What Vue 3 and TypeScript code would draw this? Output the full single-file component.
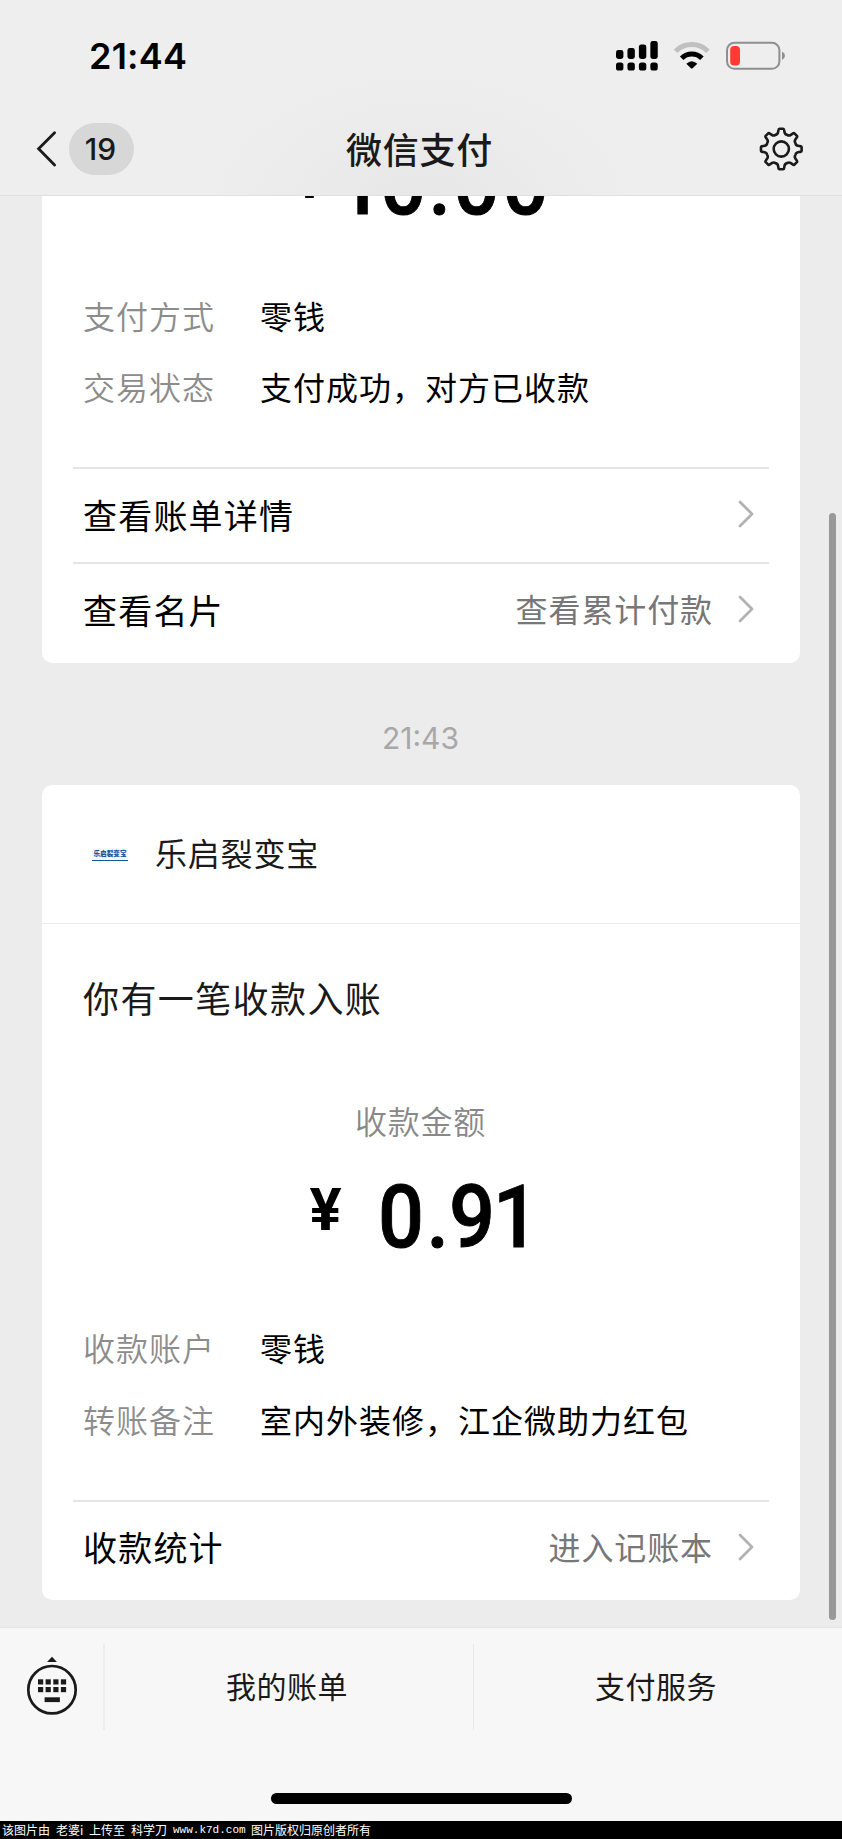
<script setup lang="ts">
interface Field {
  label: string
  value: string
}
interface Action {
  title: string
  hint?: string
}

const firstFields: Field[] = [
  { label: '支付方式', value: '零钱' },
  { label: '交易状态', value: '支付成功，对方已收款' },
]
const firstActions: Action[] = [
  { title: '查看账单详情' },
  { title: '查看名片', hint: '查看累计付款' },
]
const secondFields: Field[] = [
  { label: '收款账户', value: '零钱' },
  { label: '转账备注', value: '室内外装修，江企微助力红包' },
]
const secondActions: Action[] = [{ title: '收款统计', hint: '进入记账本' }]
const menu: string[] = ['我的账单', '支付服务']

// Amount digits are condensed horizontally; positions are given in card space.
const squeeze = 0.93
const spread = (xs: number[]): string => xs.map((x) => (x / squeeze).toFixed(2)).join(' ')
const firstDigits = spread([337, 380.2, 428.5, 453.6, 502.6])
const secondDigits = spread([378, 426.5, 449, 493])

// Eight-tooth gear outline centred on the origin.
function gearPath(): string {
  const at = (r: number, deg: number): string => {
    const a = ((deg - 90) * Math.PI) / 180
    return `${(r * Math.cos(a)).toFixed(2)} ${(r * Math.sin(a)).toFixed(2)}`
  }
  let d = ''
  for (let k = 0; k < 8; k++) {
    const c = k * 45
    d += `${k === 0 ? 'M' : 'L'}${at(19.2, c - 8.5)}`
    d += `Q${at(20.4, c - 7.5)} ${at(20.4, c - 5)}L${at(20.4, c + 5)}`
    d += `Q${at(20.4, c + 7.5)} ${at(19.2, c + 8.5)}`
    d += `L${at(17, c + 11)}Q${at(15, c + 14)} ${at(15.3, c + 22.5)}`
    d += `Q${at(15, c + 31)} ${at(17, c + 34)}`
  }
  return d + 'Z'
}
const gear = gearPath()
const signalTops: number[] = [50, 48, 44.5, 41]
const keyColumns: number[] = [37.7, 45.3, 53, 60.6]
</script>

<template>
  <div class="screen">
    <header class="header">
      <div class="status">
        <span class="clock">21:44</span>
        <svg class="status-icons" width="176" height="40" viewBox="612 36 176 40">
          <g v-for="(top, i) in signalTops" :key="i">
            <rect :x="616 + i * 11.45" :y="top" width="7.4" :height="59 - top" rx="2.4" />
            <rect :x="616 + i * 11.45" y="62.5" width="7.4" height="8" rx="2.6" />
          </g>
          <path d="M675.6 51.2A23 23 0 0 1 707.9 51.2" fill="none" stroke="#c0c0c0" stroke-width="5" />
          <path d="M681.7 58.2A14.4 14.4 0 0 1 701.9 58.2" fill="none" stroke="#000" stroke-width="5" />
          <path d="M686.3 63.7Q691.8 58.6 697.3 63.7L692.6 68.3Q691.8 69 691 68.3Z" />
          <rect x="727" y="42.8" width="52.4" height="26" rx="7.5" fill="none" stroke="#8f8f8f" stroke-width="2" />
          <rect x="730.2" y="46" width="9.8" height="19.6" rx="3.8" fill="#ff3b30" />
          <path d="M782 51.5Q785 53 785 55.8Q785 58.600 782 60Z" fill="#8f8f8f" />
        </svg>
      </div>
      <div class="nav">
        <svg class="back" width="22" height="38" viewBox="36 130 22 38">
          <path d="M54.600 132.700L38.600 148.800L54.600 165" fill="none" stroke="#1a1a1a" stroke-width="2.8" stroke-linecap="round" />
        </svg>
        <span class="badge">19</span>
        <h1 class="title">微信支付</h1>
        <svg class="gear" width="46" height="46" viewBox="-23.300 -23 46 46" fill="none" stroke="#1a1a1a" stroke-width="2.6" stroke-linejoin="round">
          <path :d="gear" />
          <circle r="7.6" />
        </svg>
      </div>
    </header>

    <main class="feed">
      <section class="card first">
        <svg class="amount" width="758" height="80" viewBox="42 1180 758 80">
          <text class="yen" x="293.500" y="1229.500">¥</text>
          <text class="digits" :transform="`scale(${squeeze} 1)`" :x="firstDigits" y="1246">10.00</text>
        </svg>
        <dl class="fields">
          <div v-for="f in firstFields" :key="f.label" class="field">
            <dt>{{ f.label }}</dt>
            <dd>{{ f.value }}</dd>
          </div>
        </dl>
        <div v-for="a in firstActions" :key="a.title" class="action">
          <span class="action-title">{{ a.title }}</span>
          <span class="hint">{{ a.hint }}</span>
          <svg class="chevron" width="18" height="30" viewBox="0 0 18 30">
            <path d="M3 3L15 15L3 27" fill="none" stroke="#b2b2b2" stroke-width="2.8" stroke-linecap="round" stroke-linejoin="round" />
          </svg>
        </div>
      </section>

      <time class="stamp">21:43</time>

      <section class="card second">
        <div class="merchant">
          <span class="logo">乐启裂变宝</span>
          <span class="merchant-name">乐启裂变宝</span>
        </div>
        <h2 class="headline">你有一笔收款入账</h2>
        <p class="caption">收款金额</p>
        <svg class="amount" width="758" height="80" viewBox="42 1180 758 80">
          <text class="yen" x="309.500" y="1229">¥</text>
          <text class="digits" :transform="`scale(${squeeze} 1)`" :x="secondDigits" y="1246">0.91</text>
        </svg>
        <dl class="fields">
          <div v-for="f in secondFields" :key="f.label" class="field">
            <dt>{{ f.label }}</dt>
            <dd>{{ f.value }}</dd>
          </div>
        </dl>
        <div v-for="a in secondActions" :key="a.title" class="action">
          <span class="action-title">{{ a.title }}</span>
          <span class="hint">{{ a.hint }}</span>
          <svg class="chevron" width="18" height="30" viewBox="0 0 18 30">
            <path d="M3 3L15 15L3 27" fill="none" stroke="#b2b2b2" stroke-width="2.8" stroke-linecap="round" stroke-linejoin="round" />
          </svg>
        </div>
      </section>
      <div class="scrollbar"></div>
    </main>

    <footer class="footer">
      <div class="menu">
        <div class="keyboard">
          <svg width="54" height="64" viewBox="24.700 1653 54 64">
            <path d="M46.800 1662L51.700 1656.800L56.600 1662Z" fill="#1a1a1a" />
            <circle cx="51.700" cy="1689.700" r="23.700" fill="none" stroke="#1a1a1a" stroke-width="2.700" />
            <g fill="#1a1a1a">
              <template v-for="x in keyColumns" :key="x">
                <rect :x="x" y="1679.300" width="5.200" height="5.200" />
                <rect :x="x" y="1687" width="5.200" height="5.200" />
              </template>
              <rect x="44.300" y="1697.300" width="15.300" height="4.800" />
            </g>
          </svg>
        </div>
        <div v-for="m in menu" :key="m" class="menu-item">{{ m }}</div>
      </div>
      <div class="home"></div>
    </footer>

    <div class="watermark">
      <span class="w1">该图片由</span><span class="w2">老婆i</span><span class="w3">上传至</span><span class="w4">科学刀</span><span class="w5">www.k7d.com</span><span class="w6">图片版权归原创者所有</span>
    </div>
  </div>
</template>

<style>
body {
  margin: 0;
  background: #ececec;
}
</style>

<style scoped>
.screen {
  width: 842px;
  height: 1839px;
  display: flex;
  flex-direction: column;
  overflow: hidden;
  background: #ececec;
  font-family: Inter, "Noto Sans CJK SC", sans-serif;
  color: #000;
}
h1, h2, p, dl, dt, dd { margin: 0; font-weight: 400; }
svg { display: block; flex: none; }

.header {
  box-sizing: border-box;
  height: 196px;
  flex: none;
  border-bottom: 1px solid #e0e0e0;
  background: radial-gradient(ellipse 210px 130px at 421px 205px, #e7e7e7, #eeeeee);
}
.status {
  height: 100px;
  display: flex;
  justify-content: space-between;
  padding: 0 54px 0 89px;
}
.clock {
  margin-top: 34px;
  height: 44px;
  line-height: 44px;
  font-size: 36px;
  font-weight: 600;
  letter-spacing: 0.2px;
}
.status-icons { margin-top: 36px; }
.nav {
  height: 95px;
  display: grid;
  grid-template-columns: 22px 76px 1fr 46px;
  align-items: center;
  padding: 0 38px 0 36px;
}
.back { margin-top: 2px; }
.badge {
  box-sizing: border-box;
  margin: 3px 0 0 11px;
  width: 65px;
  height: 52px;
  padding-right: 2px;
  border-radius: 26px;
  background: #d7d7d7;
  color: #1a1a1a;
  text-align: center;
  line-height: 52px;
  font-size: 30px;
  font-weight: 500;
}
.title {
  text-align: center;
  font-size: 36px;
  line-height: 52px;
  letter-spacing: 0.800px;
  font-weight: 500;
  color: #1a1a1a;
  padding-right: 53px;
  font-family: "Noto Sans CJK SC", sans-serif;
}
.gear { margin-top: 3px; }

.feed {
  position: relative;
  height: 1431px;
  flex: none;
  overflow: hidden;
  display: flex;
  flex-direction: column;
  padding: 0 42px;
}
.card {
  background: #fff;
  border-radius: 10px;
  display: flex;
  flex-direction: column;
  flex: none;
  overflow: hidden;
}
.first {
  border-radius: 0 0 10px 10px;
  height: 467px;
}
.first .amount { margin-top: -48px; }
.amount text { font-family: Roboto, sans-serif; }
.yen { font-size: 60px; font-weight: 700; }
.digits {
  font-size: 87px;
  font-weight: 500;
  stroke: #000;
  stroke-width: 0.9px;
}
.fields { padding: 53px 0 43px 41px; }
.field {
  display: flex;
  height: 71.5px;
  align-items: center;
  font-size: 32px;
  letter-spacing: 1px;
  line-height: 71px;
  white-space: nowrap;
}
.first .field:first-child { padding-top: 1px; height: 70.5px; }
.field dt { width: 177px; color: #8c8c8c; font-weight: 350; }
.field dd { color: #000; }
.action {
  box-sizing: border-box;
  height: 95px;
  margin: 0 31px;
  border-top: 2px solid #e5e5e5;
  display: flex;
  align-items: center;
  padding: 0 14px 4px 10px;
}
.action-title {
  font-size: 34px;
  letter-spacing: 1.200px;
  flex: 1;
}
.first .action-title { padding-top: 1px; }
.hint {
  font-size: 32px;
  letter-spacing: 0.900px;
  color: #777;
  margin: -2px 24px 0 0;
}
.stamp {
  height: 122px;
  flex: none;
  text-align: center;
  line-height: 150px;
  font-size: 30px;
  color: #a8a8a8;
  padding-right: 1px;
}
.second { height: 815px; }
.merchant {
  box-sizing: border-box;
  height: 139px;
  border-bottom: 1px solid #ebebeb;
  display: flex;
  align-items: center;
  padding-left: 50px;
}
.logo {
  box-sizing: border-box;
  width: 36px;
  height: 13px;
  margin-top: 1px;
  border-bottom: 1px solid #15569f;
  background: #f3f8fd;
  color: #15569f;
  font-size: 6.600px;
  line-height: 12px;
  font-weight: 900;
  text-align: center;
  white-space: nowrap;
}
.merchant-name {
  margin: -4px 0 0 27px;
  font-size: 32px;
  letter-spacing: 0.800px;
  color: #1a1a1a;
}
.headline {
  padding: 49px 0 0 41px;
  font-size: 36px;
  line-height: 54px;
  letter-spacing: 1.400px;
  color: #1a1a1a;
}
.caption {
  margin-top: 72px;
  height: 48px;
  line-height: 48px;
  text-align: center;
  font-size: 32px;
  letter-spacing: 0.800px;
  font-weight: 350;
  color: #888;
  padding-right: 1px;
}
.second .amount { margin-top: 34px; }
.scrollbar {
  position: absolute;
  left: 829px;
  top: 317px;
  width: 7px;
  height: 1107px;
  border-radius: 4px;
  background: #999;
}

.footer {
  box-sizing: border-box;
  height: 194px;
  flex: none;
  border-top: 1px solid #e4e4e4;
  background: #f7f7f7;
}
.menu {
  height: 86px;
  margin-top: 16px;
  display: grid;
  grid-template-columns: 103px 370px 369px;
}
.keyboard { padding: 9px 0 0 25px; }
.menu-item {
  box-sizing: border-box;
  border-left: 1px solid #e8e8e8;
  padding-right: 4px;
  text-align: center;
  line-height: 86px;
  font-size: 30px;
  letter-spacing: 0.500px;
  color: #1a1a1a;
}
.menu-item:nth-child(2) { border-left-width: 2px; border-left-color: #ededed; }
.home {
  width: 301px;
  height: 11px;
  margin: 63px auto 0;
  border-radius: 6px;
  background: #000;
}
.watermark {
  height: 18px;
  flex: none;
  display: flex;
  background: #000;
  color: #fff;
  padding-left: 2px;
  font-family: "Noto Sans CJK SC", sans-serif;
  font-size: 12px;
  line-height: 18px;
  white-space: nowrap;
}
.w1 { width: 54px; }
.w2 { width: 33px; }
.w3 { width: 42px; }
.w4 { width: 42px; }
.w5 { width: 78px; font-family: "Liberation Mono", monospace; font-size: 11px; }
</style>
